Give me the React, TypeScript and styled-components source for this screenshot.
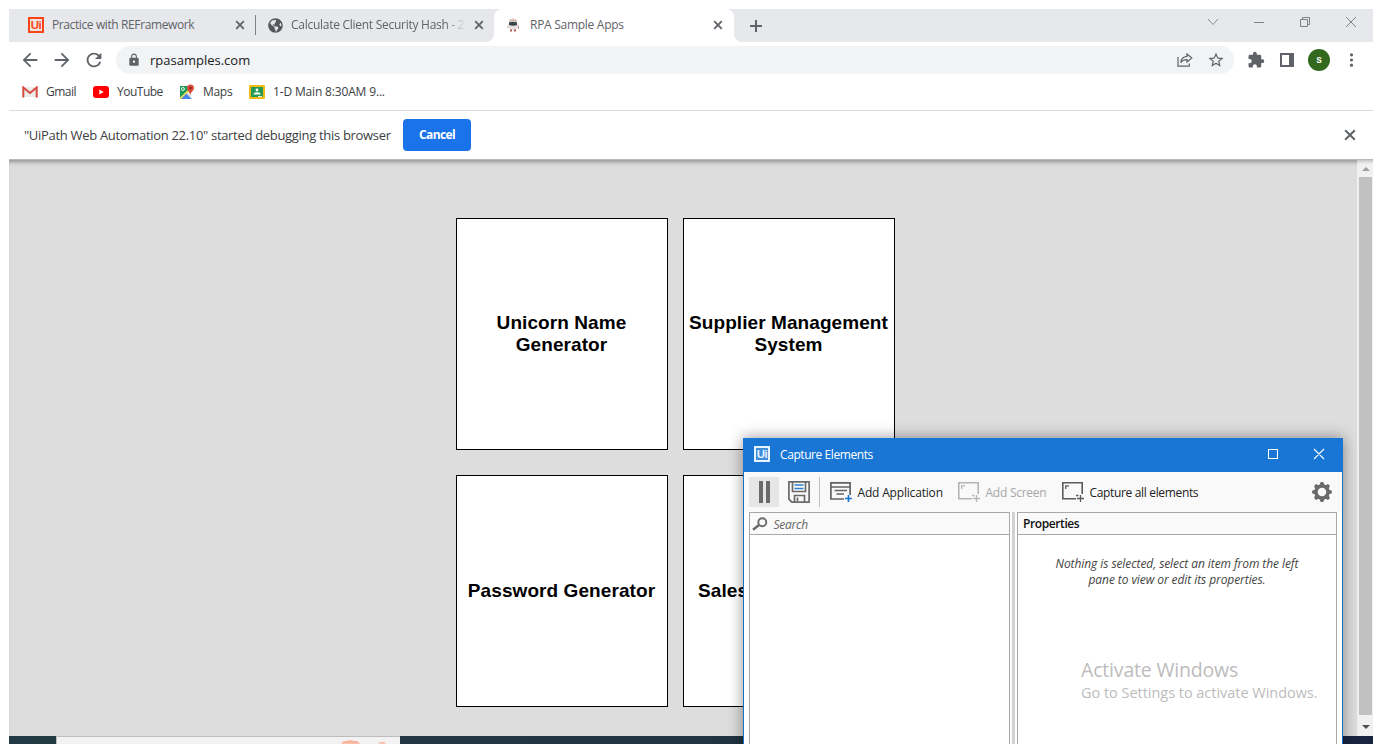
import React from "react";
import styled, { createGlobalStyle, css } from "styled-components";
import {
  MdArrowBack,
  MdArrowForward,
  MdRefresh,
  MdLock,
  MdStarBorder,
  MdExtension,
} from "react-icons/md";
import { FaGlobeAmericas } from "react-icons/fa";

const GlobalStyle = createGlobalStyle`
  *, *::before, *::after { box-sizing: border-box; }
  body { margin: 0; background: #fff; font-family: "Open Sans", "Noto Sans", sans-serif; }
  svg { display: block; flex: none; }
`;

/* ---------- shared ---------- */

const Label = styled.span<{ $size?: number; $track?: number; $color?: string; $weight?: number; $italic?: boolean }>`
  font-size: ${(p) => p.$size ?? 12}px;
  letter-spacing: ${(p) => p.$track ?? -0.3}px;
  color: ${(p) => p.$color ?? "#3c4043"};
  font-weight: ${(p) => p.$weight ?? 400};
  font-style: ${(p) => (p.$italic ? "italic" : "normal")};
  line-height: 16px;
  white-space: nowrap;
`;

const Desktop = styled.div`
  position: relative;
  width: 1382px;
  height: 744px;
  padding: 9px 9px 0;
  overflow: hidden;
  background: #fff;
`;

const Browser = styled.div`
  display: flex;
  flex-direction: column;
  height: 727px;
`;

/* ---------- tab strip ---------- */

const TabStrip = styled.div`
  display: flex;
  height: 33px;
  flex: none;
`;

const strip = css`
  display: flex;
  align-items: center;
  background: #e7e8ec;
`;

const BackgroundTabs = styled.div`
  ${strip}
  width: 485px;
  padding-bottom: 1px;
  border-bottom-right-radius: 8px;
`;

const Tab = styled.div<{ $width: number; $left: number; $right: number; $divided?: boolean }>`
  display: flex;
  align-items: center;
  gap: 8px;
  width: ${(p) => p.$width}px;
  height: 20px;
  padding-left: ${(p) => p.$left}px;
  padding-right: ${(p) => p.$right}px;
  border-right: ${(p) => (p.$divided ? "1px solid #80848a" : "none")};
`;

const TabTitle = styled(Label)<{ $fade?: boolean }>`
  flex: 1;
  overflow: hidden;
  ${(p) => p.$fade && "mask-image: linear-gradient(to right, #000 88%, transparent 100%);"}
`;

const ActiveSlot = styled.div`
  width: 240px;
  background: linear-gradient(#e7e8ec 8px, #fff 8px);
`;

const ActiveTab = styled.div`
  display: flex;
  align-items: center;
  gap: 10px;
  height: 33px;
  padding: 0 11px 1px 12px;
  background: #fff;
  border-radius: 8px 8px 0 0;
`;

const StripEnd = styled.div`
  ${strip}
  flex: 1;
  justify-content: space-between;
  padding: 0 16px 0 16px;
  border-bottom-left-radius: 8px;
`;

const WindowButtons = styled.div`
  display: flex;
  gap: 34px;
  margin-bottom: 7px;
`;

const UiMark = styled.span<{ $fg: string; $bg: string }>`
  display: flex;
  align-items: center;
  justify-content: center;
  flex: none;
  width: 16px;
  height: 16px;
  border: 2px solid ${(p) => p.$fg};
  background: ${(p) => p.$bg};
  color: ${(p) => p.$fg};
  font: bold 11.5px/12px "Liberation Sans", sans-serif;
  letter-spacing: -0.4px;
`;

/* ---------- toolbar ---------- */

const Toolbar = styled.div`
  display: flex;
  align-items: center;
  height: 36px;
  flex: none;
  padding: 0 12px 0 10px;
  color: #5f6368;
`;

const NavButtons = styled.div`
  display: flex;
  flex: none;
  gap: 10px;
  width: 97px;
`;

const Omnibox = styled.div`
  display: flex;
  align-items: center;
  flex: none;
  width: 1118px;
  height: 28px;
  padding: 0 9px 0 11px;
  border-radius: 14px;
  background: #f1f3f4;
`;

const Address = styled(Label)`
  flex: 1;
  margin-left: 9px;
`;

const OmniActions = styled.div`
  display: flex;
  align-items: center;
  gap: 14px;
`;

const ToolActions = styled.div`
  display: flex;
  align-items: center;
  flex: none;
  gap: 15px;
  padding-left: 13px;
`;

const Avatar = styled.span`
  display: flex;
  align-items: center;
  justify-content: center;
  width: 22px;
  height: 22px;
  margin: 0 -2px 0 -1px;
  border-radius: 50%;
  background: #33691e;
  color: #fff;
  font: 500 11px/22px Roboto, sans-serif;
`;

const Bookmarks = styled.div`
  display: flex;
  align-items: center;
  height: 33px;
  flex: none;
  padding: 0 0 4px 13px;
  border-bottom: 1px solid #dadce0;
`;

const Bookmark = styled.div<{ $width: number }>`
  display: flex;
  align-items: center;
  gap: 8px;
  width: ${(p) => p.$width}px;
`;

const InfoBar = styled.div`
  display: flex;
  align-items: center;
  height: 49px;
  flex: none;
  padding: 0 17px 0 15px;
  border-bottom: 1px solid #b9bbba;
`;

const InfoText = styled(Label)`
  width: 379px;
`;

const CancelButton = styled.button`
  width: 68px;
  height: 32px;
  margin-right: auto;
  padding: 0;
  border: 0;
  border-radius: 4px;
  background: #1a73e8;
  color: #fff;
  font: 700 12px/30px "Open Sans", sans-serif;
  letter-spacing: -0.6px;
`;

/* ---------- page ---------- */

const Page = styled.main`
  display: flex;
  flex: 1;
  background: #ddd;
  box-shadow: inset 0 5px 4px -3px #8e9290;
`;

const CardGrid = styled.div`
  display: grid;
  grid-template-columns: 212px 212px;
  grid-auto-rows: 232px;
  gap: 25px 15px;
  align-content: start;
  width: 1348px;
  padding: 58px 0 0 447px;
`;

const Card = styled.div<{ $start?: boolean }>`
  display: flex;
  align-items: center;
  justify-content: ${(p) => (p.$start ? "flex-start" : "center")};
  padding: 0 ${(p) => (p.$start ? 14 : 1)}px 1px ${(p) => (p.$start ? 14 : 0)}px;
  border: 1px solid #000;
  background: #fff;
  color: #000;
  text-align: center;
  font: bold 19px/22px "Liberation Sans", Arial, sans-serif;
  letter-spacing: 0.08px;
`;

const ScrollBar = styled.div`
  display: flex;
  flex-direction: column;
  align-items: center;
  width: 16px;
  padding: 7px 0 7px 1px;
  background: #f1f1f1;
  box-shadow: inset 0 4px 3px -2px #c4c6c5;
`;

const Thumb = styled.div`
  width: 13px;
  height: 538px;
  margin: 6px 0 10px;
  background: #c1c1c1;
`;

/* ---------- taskbar ---------- */

const TaskBar = styled.div`
  display: flex;
  height: 8px;
  padding-left: 47px;
  background: linear-gradient(90deg, #223a43, #213540 50%, #182440);
`;

const SearchBox = styled.div`
  display: flex;
  align-items: flex-end;
  justify-content: flex-end;
  gap: 17px;
  width: 344px;
  padding-right: 13px;
  overflow: hidden;
  border: solid #bdbdbd;
  border-width: 1px 0 0 1px;
  background: #f2f2f2;
`;

/* ---------- capture window ---------- */

const CaptureWindow = styled.section`
  position: absolute;
  left: 743px;
  top: 438px;
  display: flex;
  flex-direction: column;
  width: 600px;
  height: 330px;
  border: solid #1a6fc6;
  border-width: 0 1px;
  background: #fff;
  box-shadow: 0 0 14px rgba(0, 0, 0, 0.42);
`;

const TitleBar = styled.header`
  display: flex;
  align-items: center;
  height: 34px;
  margin: 0 -1px;
  padding: 0 18px 2px 11px;
  background: #1976d5;
`;

const WindowTitle = styled(Label)`
  flex: 1;
  margin-left: 10px;
  padding-top: 2px;
`;

const Commands = styled.div`
  display: flex;
  align-items: center;
  height: 40px;
  padding: 0 10px 0 5px;
  background: #f9f9f9;
`;

const PauseButton = styled.div`
  display: flex;
  align-items: center;
  justify-content: center;
  gap: 3px;
  width: 30px;
  height: 30px;
  margin-right: 9px;
  background: #e6e6e6;
`;

const PauseBar = styled.i`
  width: 4px;
  height: 22px;
  background: #6a6a6a;
`;

const Divider = styled.div`
  width: 1px;
  height: 30px;
  margin: 0 10px 0 9px;
  background: #bcbcbc;
`;

const Command = styled.div<{ $width: number }>`
  display: flex;
  align-items: center;
  gap: 5.5px;
  width: ${(p) => p.$width}px;
`;

const CommandLabel = styled(Label)`
  padding-top: 2px;
`;

const Panels = styled.div`
  display: flex;
  flex: 1;
  padding: 0 5px;
`;

const Panel = styled.div<{ $width: number }>`
  width: ${(p) => p.$width}px;
  border: 1px solid #a8a8a8;
`;

const PanelHead = styled.div<{ $inset?: number }>`
  display: flex;
  align-items: center;
  height: 22px;
  padding-left: ${(p) => p.$inset ?? 0}px;
  border-bottom: 1px solid #a8a8a8;
  background: #fafafa;
`;

const Splitter = styled.div`
  width: 7px;
  border: solid #fff;
  border-width: 0 2px;
  background: #d2d2d2;
`;

const Empty = styled.p`
  margin: 21px 0 0;
  text-align: center;
  font: italic 12px/16px "Open Sans", sans-serif;
  letter-spacing: -0.08px;
  color: #444;
  white-space: nowrap;
`;

const Watermark = styled.div`
  position: absolute;
  left: 1081px;
  top: 658px;
  display: flex;
  flex-direction: column;
  white-space: nowrap;
  color: #bcbcbc;
`;

const WatermarkTitle = styled.span`
  font-size: 19.5px;
  line-height: 24px;
  letter-spacing: -0.18px;
`;

const WatermarkText = styled.span`
  font-size: 14.5px;
  line-height: 22px;
  letter-spacing: -0.03px;
`;

/* ---------- drawings ---------- */

const Cross = ({ size = 10, width = 1.8, color = "#5f6368" }) => (
  <svg width={size} height={size} viewBox={`0 0 ${size} ${size}`} stroke={color} strokeWidth={width}>
    <path d={`M1.200 1.200L${size - 1.2} ${size - 1.2}M${size - 1.2} 1.200L1.200 ${size - 1.2}`} />
  </svg>
);

const UnicornIcon = () => (
  <svg width="14" height="16" viewBox="0 0 14 16">
    <path d="M3 5L4 2L6 3L7 .5L8 3L10 2L11 5Z" fill="#cdb0a6" />
    <ellipse cx="7" cy="8.600" rx="4.800" ry="4.800" fill="#e4e0e3" />
    <path d="M3 5.500Q7 4 11 5.500V8Q7 9.500 3 8Z" fill="#3b3f42" />
    <path d="M5 6H6V7H5ZM8 6H9V7H8Z" fill="#1c6662" />
    <path d="M2 8.500V11.500M12 8V11L13 12" stroke="#d9b0b2" />
    <path d="M4 12.500H6V14.500H4ZM8 12.500H10V14.500H8Z" fill="#b05a57" />
  </svg>
);

const GmailIcon = () => (
  <svg width="16" height="12" viewBox="0 0 16 12">
    <path d="M1 1H15V11H1Z" fill="#ececec" />
    <path d="M1.300 11.500V1.500L8 7L14.700 1.500V11.500" fill="none" stroke="#d54b3d" strokeWidth="2" />
  </svg>
);

const YouTubeIcon = () => (
  <svg width="16" height="12" viewBox="0 0 16 12">
    <rect width="16" height="12" rx="3" fill="#f00" />
    <path d="M6.300 3.400L10.700 6L6.300 8.600Z" fill="#fff" />
  </svg>
);

const MapsIcon = () => (
  <svg width="16" height="16" viewBox="0 0 16 16">
    <path d="M1 2H12V9L7 8L1 14Z" fill="#1f9d58" />
    <path d="M1 14L10 5L12 7L3 15H1Z" fill="#fddb4d" />
    <path d="M2 15L7.500 9.500L13 15Z" fill="#4a86ee" />
    <path d="M9 8L12 9V14L7.500 9.500Z" fill="#dcdcdc" />
    <circle cx="3.900" cy="5" r="1.500" fill="none" stroke="#fff" strokeWidth=".9" />
    <path d="M11.500 0.500A3.500 3.500 0 0 1 15 4C15 7 12 7.500 11.500 11C11 7.500 8 7 8 4A3.500 3.500 0 0 1 11.500 .500Z" fill="#dd4b3e" />
    <circle cx="11.500" cy="4" r="1.200" fill="#7d2218" />
  </svg>
);

const ClassroomIcon = () => (
  <svg width="16" height="14" viewBox="0 0 16 14">
    <rect width="16" height="14" rx="1" fill="#f4b912" />
    <rect x="2" y="2" width="12" height="10" fill="#239b56" />
    <circle cx="8" cy="5" r="1.400" fill="#fff" />
    <path d="M4.500 9.500Q4.500 7.300 8 7.300T11.500 9.500Z" fill="#fff" />
    <path d="M9 11H13V12H9Z" fill="#e8f2ea" />
  </svg>
);

const ShareIcon = () => (
  <svg width="16" height="14" viewBox="0 0 16 14" fill="none" stroke="#5f6368" strokeWidth="1.200">
    <path d="M1 4V13.200H12.300V10.500" />
    <path d="M10 1L14.800 5L10 9V6.600C7 6.600 5 7.600 3.800 9.800C4 6.500 6 3.800 10 3.400Z" />
  </svg>
);

const SaveIcon = () => (
  <svg width="22" height="22" viewBox="0 0 22 22" fill="none" stroke="#6a6a6a" strokeWidth="1.700">
    <path d="M.9 .9H21.100V21.100H3.800L.9 18.200Z" />
    <path d="M4.500 1V10.500H17.500V1M6.500 21V14.500H16.500V21M9.500 16.500V20" />
    <path d="M6.500 4H15.500M6.500 7.500H15.500" stroke="#2a7fd4" />
  </svg>
);

const AddAppIcon = () => (
  <svg width="22" height="20" viewBox="0 0 22 20" fill="none" stroke="#646464" strokeWidth="1.700">
    <path d="M14 17H.9V.9H20.100V13M1 5H20M4.500 8.500H17M6.500 12H14" />
    <path d="M18.500 13V20M15 16.500H22" stroke="#1976d5" strokeWidth="1.700" />
  </svg>
);

const ScreenIcon = ({ color }: { color: string }) => (
  <svg width="22" height="20" viewBox="0 0 22 20" fill="none" stroke={color} strokeWidth="1.600">
    <path d="M14 16.800H.8V.8H20.200V12" />
    <path d="M3.700 7V3.900H7M14 13.500H16.500" strokeWidth="1.300" />
    <path d="M18.500 13V20M15 16.500H22" strokeWidth="1.300" />
  </svg>
);

const GearIcon = () => (
  <svg width="20" height="20" viewBox="-10 -10 20 20">
    <circle r="6" fill="none" stroke="#6b6b6b" strokeWidth="3.400" />
    {[0, 45, 90, 135, 180, 225, 270, 315].map((a) => (
      <path key={a} d="M-2.600 -6.500L-1.300 -9.900H1.300L2.600 -6.500Z" fill="#6b6b6b" transform={`rotate(${a})`} />
    ))}
  </svg>
);

const SearchIcon = () => (
  <svg width="16" height="14" viewBox="0 0 16 14" fill="none" stroke="#6a6a6a">
    <circle cx="10.300" cy="5.200" r="4" strokeWidth="1.900" />
    <path d="M7 8L1 12.700" strokeWidth="2.500" />
  </svg>
);

export default function App() {
  return (
    <>
      <GlobalStyle />
      <Desktop>
        <Browser>
          <TabStrip>
            <BackgroundTabs>
              <Tab $width={247} $left={19} $right={10} $divided>
                <UiMark $fg="#fa4616" $bg="#f3e4e2">Ui</UiMark>
                <TabTitle $color="#5f6368" $track={-0.39}>Practice with REFramework</TabTitle>
                <Cross />
              </Tab>
              <Tab $width={238} $left={12} $right={10}>
                <FaGlobeAmericas size={15} color="#54575b" />
                <TabTitle $color="#5f6368" $track={-0.27} $fade>Calculate Client Security Hash - 2</TabTitle>
                <Cross />
              </Tab>
            </BackgroundTabs>
            <ActiveSlot>
              <ActiveTab>
                <UnicornIcon />
                <TabTitle $color="#5f6368" $track={-0.28}>RPA Sample Apps</TabTitle>
                <Cross />
              </ActiveTab>
            </ActiveSlot>
            <StripEnd>
              <svg width="12" height="12" viewBox="0 0 12 12" stroke="#5f6368" strokeWidth="2">
                <path d="M6 0V12M0 6H12" />
              </svg>
              <WindowButtons>
                <svg width="12" height="12" fill="none" stroke="#8b8c90"><path d="M1 3L6 8.500L11 3" /></svg>
                <svg width="12" height="12" stroke="#808185"><path d="M1 6.500H11" /></svg>
                <svg width="12" height="12" fill="none" stroke="#808185"><path d="M1.500 3.500H8.500V10.500H1.500ZM3.500 3.500V1.500H10.500V8.500H8.500" /></svg>
                <svg width="12" height="12" stroke="#808185"><path d="M1 1L11 11M11 1L1 11" /></svg>
              </WindowButtons>
            </StripEnd>
          </TabStrip>

          <Toolbar>
            <NavButtons>
              <MdArrowBack size={22} />
              <MdArrowForward size={22} />
              <MdRefresh size={22} />
            </NavButtons>
            <Omnibox>
              <MdLock size={14} />
              <Address $size={13} $track={0} $color="#202124">rpasamples.com</Address>
              <OmniActions>
                <ShareIcon />
                <MdStarBorder size={18} />
              </OmniActions>
            </Omnibox>
            <ToolActions>
              <MdExtension size={18} />
              <svg width="14" height="14" viewBox="0 0 14 14"><path d="M0 0H14V14H0ZM2 2V12H9V2Z" fill="#5f6368" fillRule="evenodd" /></svg>
              <Avatar>s</Avatar>
              <svg width="18" height="14" viewBox="0 0 18 14" fill="#5f6368">
                <circle cx="8.500" cy="1.800" r="1.600" /><circle cx="8.500" cy="7" r="1.600" /><circle cx="8.500" cy="12.200" r="1.600" />
              </svg>
            </ToolActions>
          </Toolbar>

          <Bookmarks>
            <Bookmark $width={71}><GmailIcon /><Label $track={-0.5}>Gmail</Label></Bookmark>
            <Bookmark $width={86}><YouTubeIcon /><Label $track={-0.5}>YouTube</Label></Bookmark>
            <Bookmark $width={70}><MapsIcon /><Label $track={-0.3}>Maps</Label></Bookmark>
            <Bookmark $width={150}><ClassroomIcon /><Label $track={-0.16}>1-D Main 8:30AM 9...</Label></Bookmark>
          </Bookmarks>

          <InfoBar>
            <InfoText $size={13} $track={-0.31}>"UiPath Web Automation 22.10" started debugging this browser</InfoText>
            <CancelButton>Cancel</CancelButton>
            <Cross size={12} width={2} />
          </InfoBar>

          <Page>
            <CardGrid>
              <Card>Unicorn Name<br />Generator</Card>
              <Card>Supplier Management<br />System</Card>
              <Card>Password Generator</Card>
              <Card $start>Sales</Card>
            </CardGrid>
            <ScrollBar>
              <svg width="8" height="4"><path d="M0 4L4 0L8 4Z" fill="#a0a0a0" /></svg>
              <Thumb />
              <svg width="8" height="4"><path d="M0 0L4 4L8 0Z" fill="#505050" /></svg>
            </ScrollBar>
          </Page>
        </Browser>

        <TaskBar>
          <SearchBox>
            <svg width="20" height="4" viewBox="0 0 22 4"><path d="M0 4Q2 0 6 1Q10 -1 14 1Q19 0 21 4Z" fill="#fbb199" /></svg>
            <svg width="9" height="3" viewBox="0 0 12 3"><path d="M0 3Q6 -2 11 3Z" fill="#f8b8a2" /></svg>
          </SearchBox>
        </TaskBar>

        <CaptureWindow>
          <TitleBar>
            <UiMark $fg="#e8f3ff" $bg="#3f8edc">Ui</UiMark>
            <WindowTitle $color="#fff" $track={-0.42}>Capture Elements</WindowTitle>
            <svg width="58" height="12" viewBox="0 0 58 12" fill="none" stroke="#fff" strokeWidth="1.100">
              <path d="M1.500 1.500H10.500V10.500H1.500ZM47 1L57 11M57 1L47 11" />
            </svg>
          </TitleBar>
          <Commands>
            <PauseButton><PauseBar /><PauseBar /></PauseButton>
            <SaveIcon />
            <Divider />
            <Command $width={128}><AddAppIcon /><CommandLabel $color="#222" $track={-0.18}>Add Application</CommandLabel></Command>
            <Command $width={104}><ScreenIcon color="#b5b5b5" /><CommandLabel $color="#a8a8a8" $track={-0.25}>Add Screen</CommandLabel></Command>
            <Command $width={250}><ScreenIcon color="#5c5c5c" /><CommandLabel $color="#222" $track={-0.34}>Capture all elements</CommandLabel></Command>
            <GearIcon />
          </Commands>
          <Panels>
            <Panel $width={261}>
              <PanelHead $inset={2}>
                <Command $width={200}>
                  <SearchIcon />
                  <CommandLabel $italic $color="#666" $track={-0.25}>Search</CommandLabel>
                </Command>
              </PanelHead>
            </Panel>
            <Splitter />
            <Panel $width={320}>
              <PanelHead $inset={5}>
                <Label $weight={600} $color="#111" $track={-0.4}>Properties</Label>
              </PanelHead>
              <Empty>
                Nothing is selected, select an item from the left<br />pane to view or edit its properties.
              </Empty>
            </Panel>
          </Panels>
        </CaptureWindow>

        <Watermark>
          <WatermarkTitle>Activate Windows</WatermarkTitle>
          <WatermarkText>Go to Settings to activate Windows.</WatermarkText>
        </Watermark>
      </Desktop>
    </>
  );
}
